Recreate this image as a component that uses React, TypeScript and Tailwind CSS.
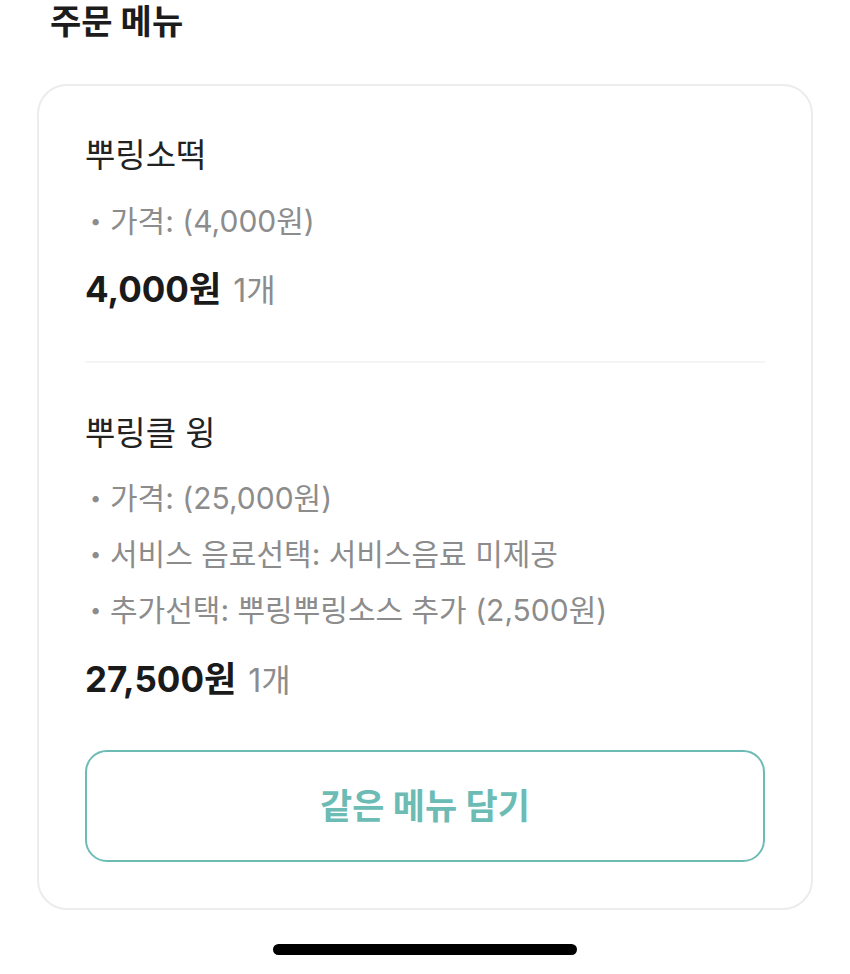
import React from "react";

const font = { fontFamily: 'Inter, "Noto Sans CJK KR", "Noto Sans", sans-serif' };

function Detail({ children }: { children: React.ReactNode }) {
  return (
    <div className="flex items-center h-[56px] text-[30px] text-[#8c8c8c] leading-[40px]">
      <span className="w-[25px] pl-[5px] text-[20px]">•</span>
      <span>{children}</span>
    </div>
  );
}

export default function App() {
  return (
    <div className="w-[850px] h-[974px] bg-white flex flex-col" style={font}>
      <div className="pl-[50px] pt-[2px] h-[84px]">
        <h1 className="text-[34px] font-bold text-[#1c1c1c] leading-[40px]">주문 메뉴</h1>
      </div>
      <div className="mx-[37px] border-2 border-[#ececec] rounded-[30px] px-[46px] pt-[49px] pb-[46px]">
        <div className="pb-[50px] border-b-2 border-[#f4f4f4]">
          <div className="text-[33px] text-[#222] leading-[40px]">뿌링소떡</div>
          <div className="mt-[18px]">
            <Detail>가격: (4,000원)</Detail>
          </div>
          <div className="mt-[20px] flex items-baseline leading-[40px]">
            <span className="text-[35px] font-bold text-[#1a1a1a]">4,000원</span>
            <span className="ml-[12px] text-[32px] text-[#8c8c8c]">1개</span>
          </div>
        </div>
        <div className="pt-[50px]">
          <div className="text-[33px] text-[#222] leading-[40px]">뿌링클 윙</div>
          <div className="mt-[17px]">
            <Detail>가격: (25,000원)</Detail>
            <Detail>서비스 음료선택: 서비스음료 미제공</Detail>
            <Detail>추가선택: 뿌링뿌링소스 추가 (2,500원)</Detail>
          </div>
          <div className="mt-[21px] flex items-baseline leading-[40px]">
            <span className="text-[35px] font-bold text-[#1a1a1a]">27,500원</span>
            <span className="ml-[12px] text-[32px] text-[#8c8c8c]">1개</span>
          </div>
        </div>
        <button className="mt-[49px] w-full h-[112px] rounded-[22px] border-2 border-[#6cbcb5] bg-white text-[35px] font-bold text-[#6cbcb5]">
          같은 메뉴 담기
        </button>
      </div>
      <div className="flex justify-center mt-[34px]">
        <div className="w-[304px] h-[11px] rounded-full bg-black" />
      </div>
    </div>
  );
}
